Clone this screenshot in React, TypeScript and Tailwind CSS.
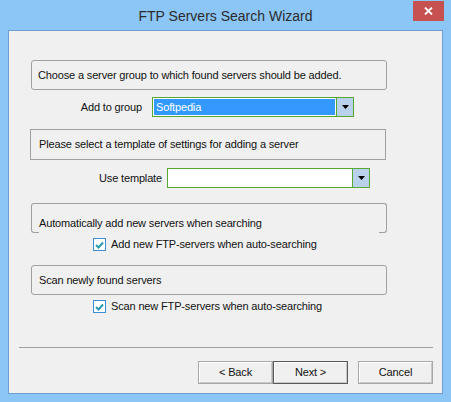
import React from "react";

const font = { fontFamily: '"Liberation Sans", Arial, sans-serif' };

function Combo({ value, width }: { value?: string; width: string }) {
  return (
    <div className={`flex h-[20px] border border-[#56a82f] bg-white ${width}`}>
      <div className="flex flex-1 items-center p-[1px]">
        {value ? (
          <div className="flex h-full w-full items-center bg-[#3399ff] pl-[2px] text-[11px] leading-none tracking-[-0.15px] text-white">
            {value}
          </div>
        ) : null}
      </div>
      <div className="flex w-[17px] items-center justify-center border-l border-[#56a82f] bg-[#b9d1ea]">
        <svg width="7" height="4" viewBox="0 0 7 4">
          <path d="M0 0h7L3.5 4z" fill="#000" />
        </svg>
      </div>
    </div>
  );
}

function Check({ label }: { label: string }) {
  return (
    <div className="flex h-[13px] items-center">
      <div className="flex h-[13px] w-[13px] items-center justify-center border border-[#3b8fd6] bg-white">
        <svg width="9" height="8" viewBox="0 0 9 8">
          <path d="M1 4l2.5 2.5L8 1.5" stroke="#2a9ab0" strokeWidth="2" fill="none" />
        </svg>
      </div>
      <span className="ml-[5px] whitespace-nowrap text-[11px] leading-none tracking-[-0.15px] text-[#111]">
        {label}
      </span>
    </div>
  );
}

function Btn({ label, def }: { label: string; def?: boolean }) {
  return (
    <div
      className={`flex h-[23px] w-[75px] ${def ? "border border-[#5a5a5a]" : "border border-[#a8a8a8]"}`}
    >
      <div className="flex flex-1 items-center justify-center border-t border-l border-t-white border-l-white border-b border-r border-b-[#c8c8c8] border-r-[#c8c8c8] bg-[#f0f0f0] text-[11px] leading-none tracking-[-0.15px] text-[#111]">
        {label}
      </div>
    </div>
  );
}

export default function App() {
  return (
    <div className="flex h-[402px] w-[451px] flex-col overflow-hidden bg-[#8cc6f7]" style={font}>
      <div className="relative flex h-[30px] shrink-0 items-center justify-center">
        <span className="pt-[1px] text-[14px] leading-none text-[#2b2b2b]">FTP Servers Search Wizard</span>
        <div className="absolute right-[7px] top-[1px] flex h-[20px] w-[31px] items-center justify-center bg-[#c75050]">
          <svg width="9" height="8" viewBox="0 0 9 8">
            <path d="M1 0.5l7 7M8 0.5l-7 7" stroke="#fff" strokeWidth="1.8" />
          </svg>
        </div>
      </div>
      <div className="mx-[8px] mb-[8px] flex flex-1 flex-col border border-[#6f9fd0] bg-[#f0f0f0]">
        {/* box 1 */}
        <div className="ml-[22px] mt-[29px] flex h-[30px] w-[356px] items-center whitespace-nowrap rounded-[3px] border border-[#a0a0a0] pl-[6px] text-[11px] leading-none tracking-[-0.15px] text-[#111]">
          Choose a server group to which found servers should be added.
        </div>
        <div className="mt-[7px] flex h-[20px] items-center">
          <span className="ml-[62px] w-[71px] whitespace-nowrap text-right text-[11px] leading-none tracking-[-0.15px] text-[#111]">
            Add to group
          </span>
          <div className="ml-[10px]">
            <Combo value="Softpedia" width="w-[202px]" />
          </div>
        </div>
        {/* box 2 */}
        <div className="ml-[21px] mt-[12px] flex h-[31px] w-[356px] items-center whitespace-nowrap border border-[#a0a0a0] pl-[8px] text-[11px] leading-none tracking-[-0.15px] text-[#111]">
          Please select a template of settings for adding a server
        </div>
        <div className="mt-[8px] flex h-[20px] items-center">
          <span className="ml-[81px] w-[72px] whitespace-nowrap text-right text-[11px] leading-none tracking-[-0.15px] text-[#111]">
            Use template
          </span>
          <div className="ml-[5px]">
            <Combo width="w-[203px]" />
          </div>
        </div>
        {/* box 3 */}
        <div className="ml-[22px] mt-[15px] flex w-[356px] flex-col">
          <div className="flex h-[27px] items-end whitespace-nowrap rounded-t-[3px] border-t border-l border-r border-[#a0a0a0] pb-[1px] pl-[7px] text-[11px] leading-none tracking-[-0.15px] text-[#111]">
            Automatically add new servers when searching
          </div>
          <div className="flex h-[3px] justify-between">
            <div className="w-[8px] rounded-bl-[3px] border-b border-l border-[#a0a0a0]" />
            <div className="w-[8px] rounded-br-[3px] border-b border-r border-[#a0a0a0]" />
          </div>
        </div>
        <div className="ml-[84px] mt-[5px]">
          <Check label="Add new FTP-servers when auto-searching" />
        </div>
        {/* box 4 */}
        <div className="ml-[22px] mt-[14px] flex h-[30px] w-[356px] items-center whitespace-nowrap rounded-[3px] border border-[#a0a0a0] pl-[7px] text-[11px] leading-none tracking-[-0.15px] text-[#111]">
          Scan newly found servers
        </div>
        <div className="ml-[84px] mt-[5px]">
          <Check label="Scan new FTP-servers when auto-searching" />
        </div>
        <div className="ml-[10px] mt-[34px] h-[1px] w-[414px] bg-[#a0a0a0]" />
        <div className="ml-[189px] mt-[13px] flex">
          <Btn label="< Back" />
          <Btn label="Next >" def />
          <div className="ml-[10px]">
            <Btn label="Cancel" />
          </div>
        </div>
      </div>
    </div>
  );
}
